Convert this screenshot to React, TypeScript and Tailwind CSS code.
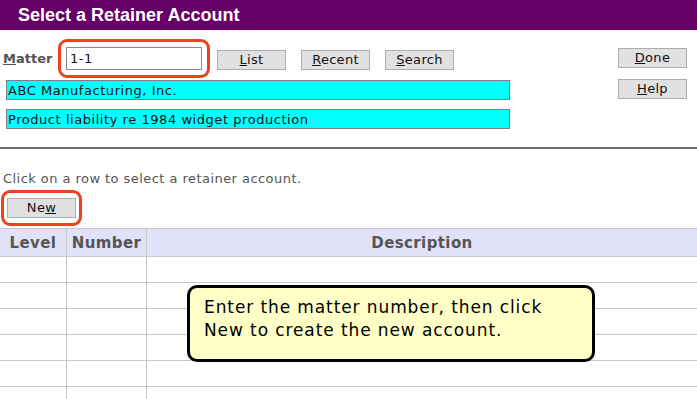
import React from 'react'

const btn =
  'h-[20px] w-[69px] bg-[#e1e1e1] border border-[#adadad] text-[13px] leading-[18px] tracking-[0.3px] text-[#111] text-center'

const Key = ({ label, k }: { label: string; k: number }) => (
  <>
    {label.slice(0, k)}
    <span className="underline">{label[k]}</span>
    {label.slice(k + 1)}
  </>
)

const rows = [0, 1, 2, 3, 4, 5]

export default function App() {
  return (
    <div
      className="relative w-[697px] h-[399px] overflow-hidden bg-white"
      style={{ fontFamily: '"DejaVu Sans", Verdana, sans-serif' }}
    >
      <div
        className="h-[30px] bg-[#660066] pl-[18px] text-white font-bold text-[18px] leading-[30px]"
        style={{ fontFamily: '"Liberation Sans", Arial, sans-serif' }}
      >
        Select a Retainer Account
      </div>

      <div className="flex h-[119px] border-b-2 border-[#6b6b6b]">
        <div className="flex flex-col">
          <div className="flex items-center mt-[9px]">
            <span className="ml-[3px] w-[55px] text-[13px] font-bold text-[#555]">
              <Key label="Matter" k={0} />
            </span>
            <div className="border-[3px] border-[#f0401e] rounded-[9px] p-[5px]">
              <div className="w-[136px] h-[23px] border border-[#8a8a8a] px-[3px] text-[13px] leading-[21px] tracking-[0.5px] text-[#111]">
                1-1
              </div>
            </div>
            <div className="flex gap-[15px] ml-[7px] mt-[3px]">
              <button className={btn}><Key label="List" k={0} /></button>
              <button className={btn}><Key label="Recent" k={0} /></button>
              <button className={btn}><Key label="Search" k={0} /></button>
            </div>
          </div>
          <div className="ml-[6px] mt-[2px] w-[504px] h-[20px] bg-[#00ffff] border border-[#7f7f7f] px-[1px] pt-[1px] text-[13px] leading-[17px] tracking-[0.55px] text-[#111]">
            ABC Manufacturing, Inc.
          </div>
          <div className="ml-[6px] mt-[9px] w-[504px] h-[20px] bg-[#00ffff] border border-[#7f7f7f] px-[1px] pt-[1px] text-[13px] leading-[17px] tracking-[0.55px] text-[#111]">
            Product liability re 1984 widget production
          </div>
        </div>
        <div className="ml-auto mr-[10px] mt-[18px] flex flex-col gap-[11px]">
          <button className={btn}><Key label="Done" k={0} /></button>
          <button className={btn}><Key label="Help" k={0} /></button>
        </div>
      </div>

      <div className="mt-[22px] ml-[3px] text-[13px] leading-[16px] tracking-[0.45px] text-[#555]">
        Click on a row to select a retainer account.
      </div>
      <div className="flex mt-[3px] ml-[1px] w-[81px] border-[3px] border-[#f0401e] rounded-[9px] px-[3px] py-[5px]">
        <button className={btn}>
          Ne<span className="underline">w</span>
        </button>
      </div>

      <div className="mt-[2px] border-t border-[#c8c8c8]">
        <div className="grid grid-cols-[67px_80px_1fr] h-[28px] bg-[#e1e1f7] border-b border-[#c8c8c8] pt-[2px] text-[15px] font-bold tracking-[0.4px] text-[#555] leading-[25px]">
          <div className="border-r border-[#c8c8c8] -mt-[2px] text-center pt-[2px]">Level</div>
          <div className="border-r border-[#c8c8c8] -mt-[2px] text-center pt-[2px]">Number</div>
          <div className="text-center">Description</div>
        </div>
        {rows.map((r) => (
          <div key={r} className="grid grid-cols-[67px_80px_1fr] h-[26px] border-b border-[#c8c8c8]">
            <div className="border-r border-[#c8c8c8]" />
            <div className="border-r border-[#c8c8c8]" />
            <div />
          </div>
        ))}
      </div>

      <div className="absolute left-[187px] top-[285px] w-[408px] h-[77px] bg-[#ffffc8] border-[3px] border-black rounded-[10px] pl-[14px] pt-[8px] text-[17px] leading-[23px] tracking-[0.9px] text-black">
        Enter the matter number, then click
        <br />
        New to create the new account.
      </div>
    </div>
  )
}
